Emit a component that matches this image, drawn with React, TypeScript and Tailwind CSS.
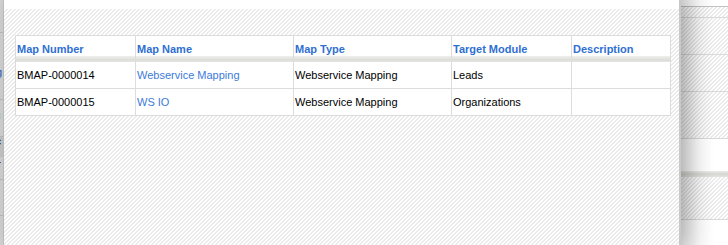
import React from "react";

const hatch =
  "bg-[linear-gradient(-45deg,#ebebeb_25%,#ffffff_25%,#ffffff_50%,#ebebeb_50%,#ebebeb_75%,#ffffff_75%)] bg-[length:4px_4px]";

const cols = [
  "w-[120px]",
  "w-[158px]",
  "w-[158px]",
  "w-[120px]",
  "w-[99px]",
];

const headers = ["Map Number", "Map Name", "Map Type", "Target Module", "Description"];

const rows = [
  ["BMAP-0000014", "Webservice Mapping", "Webservice Mapping", "Leads", ""],
  ["BMAP-0000015", "WS IO", "Webservice Mapping", "Organizations", ""],
];

export default function App() {
  return (
    <div
      className="flex h-[245px] w-[728px] overflow-hidden bg-white text-[11px] leading-[13px]"
      style={{ fontFamily: '"Liberation Sans", Arial, sans-serif' }}
    >
      {/* left background sliver */}
      <div className="flex w-[4px] shrink-0 flex-col overflow-hidden bg-[#d3d3d3] border-r border-[#c4c4c4]">
        <div className="h-[33px] border-b border-[#bdbdbd]" />
        <div className="relative h-[67px] border-b border-[#bdbdbd]">
          <span className="absolute -left-[4px] top-[33px] text-[11px] text-[#2a5fb8]">g</span>
        </div>
        <div className="relative h-[37px] border-b border-[#bdbdbd]">
          <span className="absolute -left-[5px] top-[9px] text-[11px] text-[#2a5fb8]">c</span>
        </div>
        <div className="relative h-[20px] bg-[#c6c6c6]">
          <span className="absolute -left-[5px] top-[-2px] text-[11px] font-bold text-[#22338a]">c</span>
        </div>
        <div className="relative h-[23px] border-b border-[#bdbdbd]">
          <span className="absolute -left-[2px] top-[5px] h-[1px] w-[3px] bg-[#3a6ac0]" />
        </div>
        <div className="h-[36px] border-b border-[#bdbdbd]" />
        <div className="flex-1" />
      </div>

      {/* dialog */}
      <div className="relative z-10 flex w-[677px] shrink-0 flex-col border-r-2 border-[#c9c9c9] shadow-[6px_0_22px_rgba(0,0,0,0.2)]">
        <div className="h-[9px] bg-white" />
        <div className={`flex-1 ${hatch} pl-[11px] pt-[26px]`}>
          <div className="flex w-[656px] flex-col border-l border-t border-[#dcdcdc] bg-white">
            <div className="flex">
              {headers.map((h, i) => (
                <div
                  key={h}
                  className={`${cols[i]} h-[26px] shrink-0 border-r border-[#dcdcdc] bg-[linear-gradient(to_bottom,#ffffff_0px,#ffffff_20px,#efefeb_20px,#dcdcd8_24px,#e6e6e2_26px)] pl-[1px] pt-[7px] font-bold text-[#2f6fd2]`}
                >
                  {h}
                </div>
              ))}
            </div>
            {rows.map((r, ri) => (
              <div key={ri} className="flex">
                {r.map((c, ci) => (
                  <div
                    key={ci}
                    className={`${cols[ci]} flex h-[27px] shrink-0 items-center border-b border-r border-[#dcdcdc] pl-[1px] pt-[1px] ${
                      ci === 1 ? "text-[#3b7bd9]" : "text-black"
                    }`}
                  >
                    {c}
                  </div>
                ))}
              </div>
            ))}
          </div>
        </div>
      </div>

      {/* right background sliver */}
      <div className="relative flex flex-1 flex-col">
        <div className="h-[7px] bg-white border-b border-[#c2c2c2]" />
        <div className={`h-[11px] ${hatch} border-b border-[#dadada]`} />
        <div className={`h-[37px] ${hatch} border-b border-[#dadada]`} />
        <div className={`h-[37px] ${hatch} border-b border-[#dadada]`} />
        <div className={`h-[47px] ${hatch} border-b border-[#dadada]`} />
        <div className="h-[32px] bg-white" />
        <div className="h-[6px] bg-[linear-gradient(to_bottom,#ececea,#d6d6d2,#e2e2de)]" />
        <div className={`h-[43px] ${hatch} border-b border-[#dadada]`} />
        <div className="flex-1 bg-white" />
        <div className="pointer-events-none absolute inset-y-0 left-0 w-[34px] bg-[linear-gradient(to_right,rgba(0,0,0,0.14),rgba(0,0,0,0.04)_55%,rgba(0,0,0,0))]" />
      </div>
    </div>
  );
}
